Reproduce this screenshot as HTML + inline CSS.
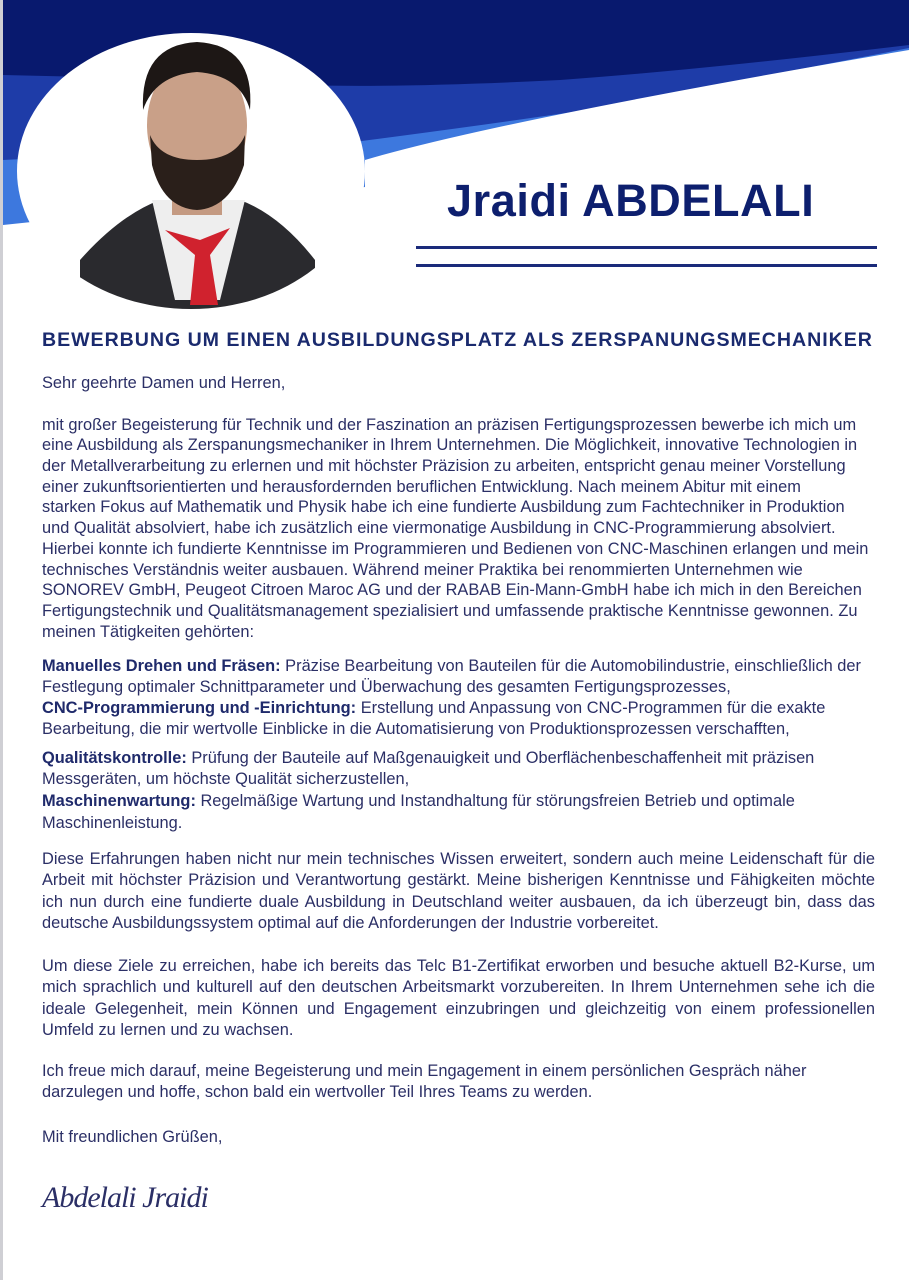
<!DOCTYPE html>
<html><head><meta charset="utf-8"><style>
body{margin:0;width:909px;height:1280px;position:relative;overflow:hidden;background:#fff;font-family:"Liberation Sans",sans-serif;color:#2b2f66}
.l{position:absolute;left:42px;font-size:16.4px;line-height:20px;white-space:nowrap}
.j{width:833px;text-align:justify;text-align-last:justify}
b{color:#1f2a6b}
</style></head><body>
<div style="position:absolute;left:0;top:0;width:3px;height:1280px;background:#cfcfd4"></div>
<svg width="909" height="320" style="position:absolute;left:0;top:0">
<polygon points="3,0 909,0 909,130 3,225" fill="#3d78de"/>
<path d="M3,0 H909 V48 L600,108 Q450,130 330,145 Q200,150 3,160 Z" fill="#1e3ca8"/>
<path d="M3,0 H909 V45 Q700,70 560,80 Q400,88 300,85 Q150,78 3,75 Z" fill="#08196e"/>
<path d="M909,50 L909,320 L3,320 L3,225 L365,225 L365,160 Q500,120 909,50 Z" fill="#fff"/>
<ellipse cx="191" cy="171" rx="174" ry="138" fill="#fff"/>
<clipPath id="c"><ellipse cx="191" cy="171" rx="174" ry="138"/></clipPath>
<g clip-path="url(#c)">
<path d="M80,260 Q120,215 160,200 L240,200 Q280,215 315,260 L315,320 L80,320 Z" fill="#2a2a2e"/>
<path d="M152,200 L175,300 L220,300 L245,200 Z" fill="#eeeeee"/>
<path d="M165,230 L200,240 L230,228 L210,255 L218,305 L190,305 L195,255 Z" fill="#d0222e"/>
<rect x="172" y="170" width="50" height="45" fill="#c49a82"/>
<ellipse cx="197" cy="125" rx="50" ry="68" fill="#c9a088"/>
<path d="M150,135 Q160,160 197,160 Q235,160 245,135 L244,165 Q230,208 197,210 Q163,208 152,165 Z" fill="#2a1f1a"/>
<path d="M143,110 Q140,45 197,42 Q255,45 250,110 Q240,75 197,72 Q155,75 143,110 Z" fill="#1d1715"/>
</g>
</svg>
<div style="position:absolute;left:447px;top:176px;font-size:45px;font-weight:bold;color:#0d1f6e;letter-spacing:0.6px;line-height:50px">Jraidi ABDELALI</div>
<div style="position:absolute;left:416px;top:246px;width:461px;height:3px;background:#1a2a7a"></div>
<div style="position:absolute;left:416px;top:264px;width:461px;height:3px;background:#1a2a7a"></div>
<div style="position:absolute;left:42px;top:328px;width:831px;font-size:19.6px;font-weight:bold;color:#1a2a6e;line-height:24px;white-space:nowrap;letter-spacing:0.95px">BEWERBUNG UM EINEN AUSBILDUNGSPLATZ ALS ZERSPANUNGSMECHANIKER</div>
<div class="l" style="top:373px">Sehr geehrte Damen und Herren,</div>
<div class="l" style="top:415px">mit großer Begeisterung für Technik und der Faszination an präzisen Fertigungsprozessen bewerbe ich mich um</div>
<div class="l" style="top:435px">eine Ausbildung als Zerspanungsmechaniker in Ihrem Unternehmen. Die Möglichkeit, innovative Technologien in</div>
<div class="l" style="top:456px">der Metallverarbeitung zu erlernen und mit höchster Präzision zu arbeiten, entspricht genau meiner Vorstellung</div>
<div class="l" style="top:477px">einer zukunftsorientierten und herausfordernden beruflichen Entwicklung. Nach meinem Abitur mit einem</div>
<div class="l" style="top:497px">starken Fokus auf Mathematik und Physik habe ich eine fundierte Ausbildung zum Fachtechniker in Produktion</div>
<div class="l" style="top:518px">und Qualität absolviert, habe ich zusätzlich eine viermonatige Ausbildung in CNC-Programmierung absolviert.</div>
<div class="l" style="top:539px">Hierbei konnte ich fundierte Kenntnisse im Programmieren und Bedienen von CNC-Maschinen erlangen und mein</div>
<div class="l" style="top:560px">technisches Verständnis weiter ausbauen. Während meiner Praktika bei renommierten Unternehmen wie</div>
<div class="l" style="top:580px">SONOREV GmbH, Peugeot Citroen Maroc AG und der RABAB Ein-Mann-GmbH habe ich mich in den Bereichen</div>
<div class="l" style="top:601px">Fertigungstechnik und Qualitätsmanagement spezialisiert und umfassende praktische Kenntnisse gewonnen. Zu</div>
<div class="l" style="top:622px">meinen Tätigkeiten gehörten:</div>
<div class="l" style="top:656px"><b>Manuelles Drehen und Fräsen:</b> Präzise Bearbeitung von Bauteilen für die Automobilindustrie, einschließlich der</div>
<div class="l" style="top:677px">Festlegung optimaler Schnittparameter und Überwachung des gesamten Fertigungsprozesses,</div>
<div class="l" style="top:698px"><b>CNC-Programmierung und -Einrichtung:</b> Erstellung und Anpassung von CNC-Programmen für die exakte</div>
<div class="l" style="top:719px">Bearbeitung, die mir wertvolle Einblicke in die Automatisierung von Produktionsprozessen verschafften,</div>
<div class="l" style="top:748px"><b>Qualitätskontrolle:</b> Prüfung der Bauteile auf Maßgenauigkeit und Oberflächenbeschaffenheit mit präzisen</div>
<div class="l" style="top:769px">Messgeräten, um höchste Qualität sicherzustellen,</div>
<div class="l" style="top:791px"><b>Maschinenwartung:</b> Regelmäßige Wartung und Instandhaltung für störungsfreien Betrieb und optimale</div>
<div class="l" style="top:813px">Maschinenleistung.</div>
<div class="l j" style="top:849px">Diese Erfahrungen haben nicht nur mein technisches Wissen erweitert, sondern auch meine Leidenschaft für die</div>
<div class="l j" style="top:870px">Arbeit mit höchster Präzision und Verantwortung gestärkt. Meine bisherigen Kenntnisse und Fähigkeiten möchte</div>
<div class="l j" style="top:892px">ich nun durch eine fundierte duale Ausbildung in Deutschland weiter ausbauen, da ich überzeugt bin, dass das</div>
<div class="l" style="top:913px">deutsche Ausbildungssystem optimal auf die Anforderungen der Industrie vorbereitet.</div>
<div class="l j" style="top:956px">Um diese Ziele zu erreichen, habe ich bereits das Telc B1-Zertifikat erworben und besuche aktuell B2-Kurse, um</div>
<div class="l j" style="top:977px">mich sprachlich und kulturell auf den deutschen Arbeitsmarkt vorzubereiten. In Ihrem Unternehmen sehe ich die</div>
<div class="l j" style="top:999px">ideale Gelegenheit, mein Können und Engagement einzubringen und gleichzeitig von einem professionellen</div>
<div class="l" style="top:1020px">Umfeld zu lernen und zu wachsen.</div>
<div class="l" style="top:1061px">Ich freue mich darauf, meine Begeisterung und mein Engagement in einem persönlichen Gespräch näher</div>
<div class="l" style="top:1082px">darzulegen und hoffe, schon bald ein wertvoller Teil Ihres Teams zu werden.</div>
<div class="l" style="top:1127px">Mit freundlichen Grüßen,</div>
<div style="position:absolute;left:42px;top:1180px;font-family:'Liberation Serif',serif;font-style:italic;font-size:30px;color:#2b2f66;letter-spacing:-1px;line-height:36px">Abdelali Jraidi</div>
</body></html>
